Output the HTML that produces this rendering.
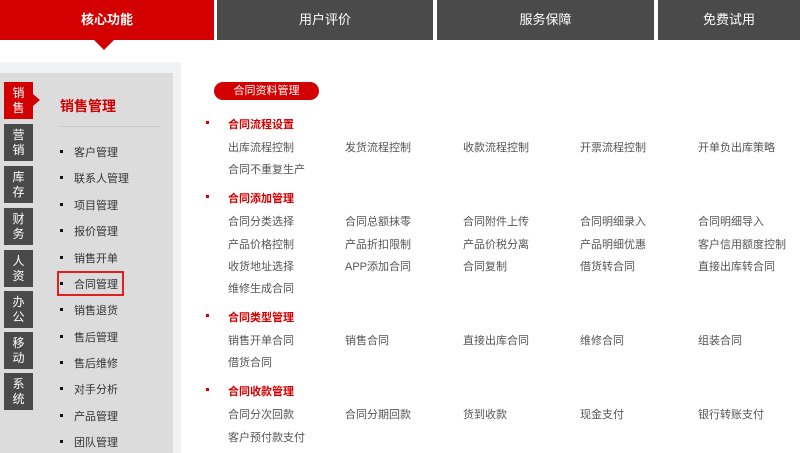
<!DOCTYPE html>
<html><head><meta charset="utf-8"><style>
*{margin:0;padding:0;box-sizing:border-box}
body{width:800px;height:453px;overflow:hidden;background:#fff;font-family:"Liberation Sans","Noto Sans CJK SC",sans-serif;position:relative}
.a{position:absolute;white-space:nowrap}
.tab{position:absolute;top:0;height:40px;background:#4a4a4a;color:#fff;font-size:13px;line-height:40px;text-align:center}
.vt{position:absolute;left:4px;width:29px;height:37px;background:#4a4a4a;color:#fff;font-size:12px;line-height:15px;text-align:center;padding-top:4px}
.mi{position:absolute;left:60px;font-size:11px;color:#333}
.mi:before{content:"";position:absolute;left:0;top:6px;width:3px;height:3px;background:#111}
.mi span{margin-left:14px}
.h{position:absolute;left:228px;font-size:11px;color:#d20000;font-weight:bold}
.h:before{content:"";position:absolute;left:-22px;top:5px;width:3px;height:3px;background:#d20000}
.t{position:absolute;font-size:11px;color:#555}
</style></head><body>
<div class="tab" style="left:0;width:214px;background:#d20000;font-weight:bold">核心功能</div>
<div class="a" style="left:94px;top:40px;width:0;height:0;border-left:10px solid transparent;border-right:10px solid transparent;border-top:10px solid #d20000"></div>
<div class="tab" style="left:217px;width:216px">用户评价</div>
<div class="tab" style="left:437px;width:217px">服务保障</div>
<div class="tab" style="left:658px;width:142px">免费试用</div>
<div class="a" style="left:0;top:62px;width:181px;height:391px;background:#f1f2f4"></div>
<div class="a" style="left:0;top:73px;width:173px;height:380px;background:#dcdcdc"></div>
<div class="vt" style="top:82px;background:#d20000">销<br>售</div>
<div class="a" style="left:33px;top:94px;border-top:6px solid transparent;border-bottom:6px solid transparent;border-left:7px solid #d20000"></div>
<div class="vt" style="top:124px">营<br>销</div>
<div class="vt" style="top:166px">库<br>存</div>
<div class="vt" style="top:208px">财<br>务</div>
<div class="vt" style="top:250px">人<br>资</div>
<div class="vt" style="top:291px">办<br>公</div>
<div class="vt" style="top:332px">移<br>动</div>
<div class="vt" style="top:373px">系<br>统</div>
<div class="a" style="left:60px;top:96px;font-size:14px;color:#d20000;font-weight:bold">销售管理</div>
<div class="a" style="left:60px;top:126px;width:101px;height:1px;background:#c8c8c8"></div>
<div class="mi" style="top:144px"><span>客户管理</span></div>
<div class="mi" style="top:170px"><span>联系人管理</span></div>
<div class="mi" style="top:197px"><span>项目管理</span></div>
<div class="mi" style="top:223px"><span>报价管理</span></div>
<div class="mi" style="top:250px"><span>销售开单</span></div>
<div class="mi" style="top:276px"><span>合同管理</span></div>
<div class="a" style="left:57px;top:271px;width:67px;height:25px;border:2px solid #e02020"></div>
<div class="mi" style="top:302px"><span>销售退货</span></div>
<div class="mi" style="top:329px"><span>售后管理</span></div>
<div class="mi" style="top:355px"><span>售后维修</span></div>
<div class="mi" style="top:381px"><span>对手分析</span></div>
<div class="mi" style="top:408px"><span>产品管理</span></div>
<div class="mi" style="top:434px"><span>团队管理</span></div>
<div class="a" style="left:214px;top:82px;width:105px;height:18px;background:#d20000;border-radius:9px;color:#fff;font-size:11px;line-height:18px;text-align:center">合同资料管理</div>
<div class="h" style="top:116px">合同流程设置</div>
<div class="t" style="left:228px;top:139px">出库流程控制</div><div class="t" style="left:345px;top:139px">发货流程控制</div><div class="t" style="left:463px;top:139px">收款流程控制</div><div class="t" style="left:580px;top:139px">开票流程控制</div><div class="t" style="left:698px;top:139px">开单负出库策略</div>
<div class="t" style="left:228px;top:161px">合同不重复生产</div>
<div class="h" style="top:190px">合同添加管理</div>
<div class="t" style="left:228px;top:213px">合同分类选择</div><div class="t" style="left:345px;top:213px">合同总额抹零</div><div class="t" style="left:463px;top:213px">合同附件上传</div><div class="t" style="left:580px;top:213px">合同明细录入</div><div class="t" style="left:698px;top:213px">合同明细导入</div>
<div class="t" style="left:228px;top:236px">产品价格控制</div><div class="t" style="left:345px;top:236px">产品折扣限制</div><div class="t" style="left:463px;top:236px">产品价税分离</div><div class="t" style="left:580px;top:236px">产品明细优惠</div><div class="t" style="left:698px;top:236px">客户信用额度控制</div>
<div class="t" style="left:228px;top:258px">收货地址选择</div><div class="t" style="left:345px;top:258px">APP添加合同</div><div class="t" style="left:463px;top:258px">合同复制</div><div class="t" style="left:580px;top:258px">借货转合同</div><div class="t" style="left:698px;top:258px">直接出库转合同</div>
<div class="t" style="left:228px;top:280px">维修生成合同</div>
<div class="h" style="top:309px">合同类型管理</div>
<div class="t" style="left:228px;top:332px">销售开单合同</div><div class="t" style="left:345px;top:332px">销售合同</div><div class="t" style="left:463px;top:332px">直接出库合同</div><div class="t" style="left:580px;top:332px">维修合同</div><div class="t" style="left:698px;top:332px">组装合同</div>
<div class="t" style="left:228px;top:354px">借货合同</div>
<div class="h" style="top:383px">合同收款管理</div>
<div class="t" style="left:228px;top:406px">合同分次回款</div><div class="t" style="left:345px;top:406px">合同分期回款</div><div class="t" style="left:463px;top:406px">货到收款</div><div class="t" style="left:580px;top:406px">现金支付</div><div class="t" style="left:698px;top:406px">银行转账支付</div>
<div class="t" style="left:228px;top:429px">客户预付款支付</div>
</body></html>
